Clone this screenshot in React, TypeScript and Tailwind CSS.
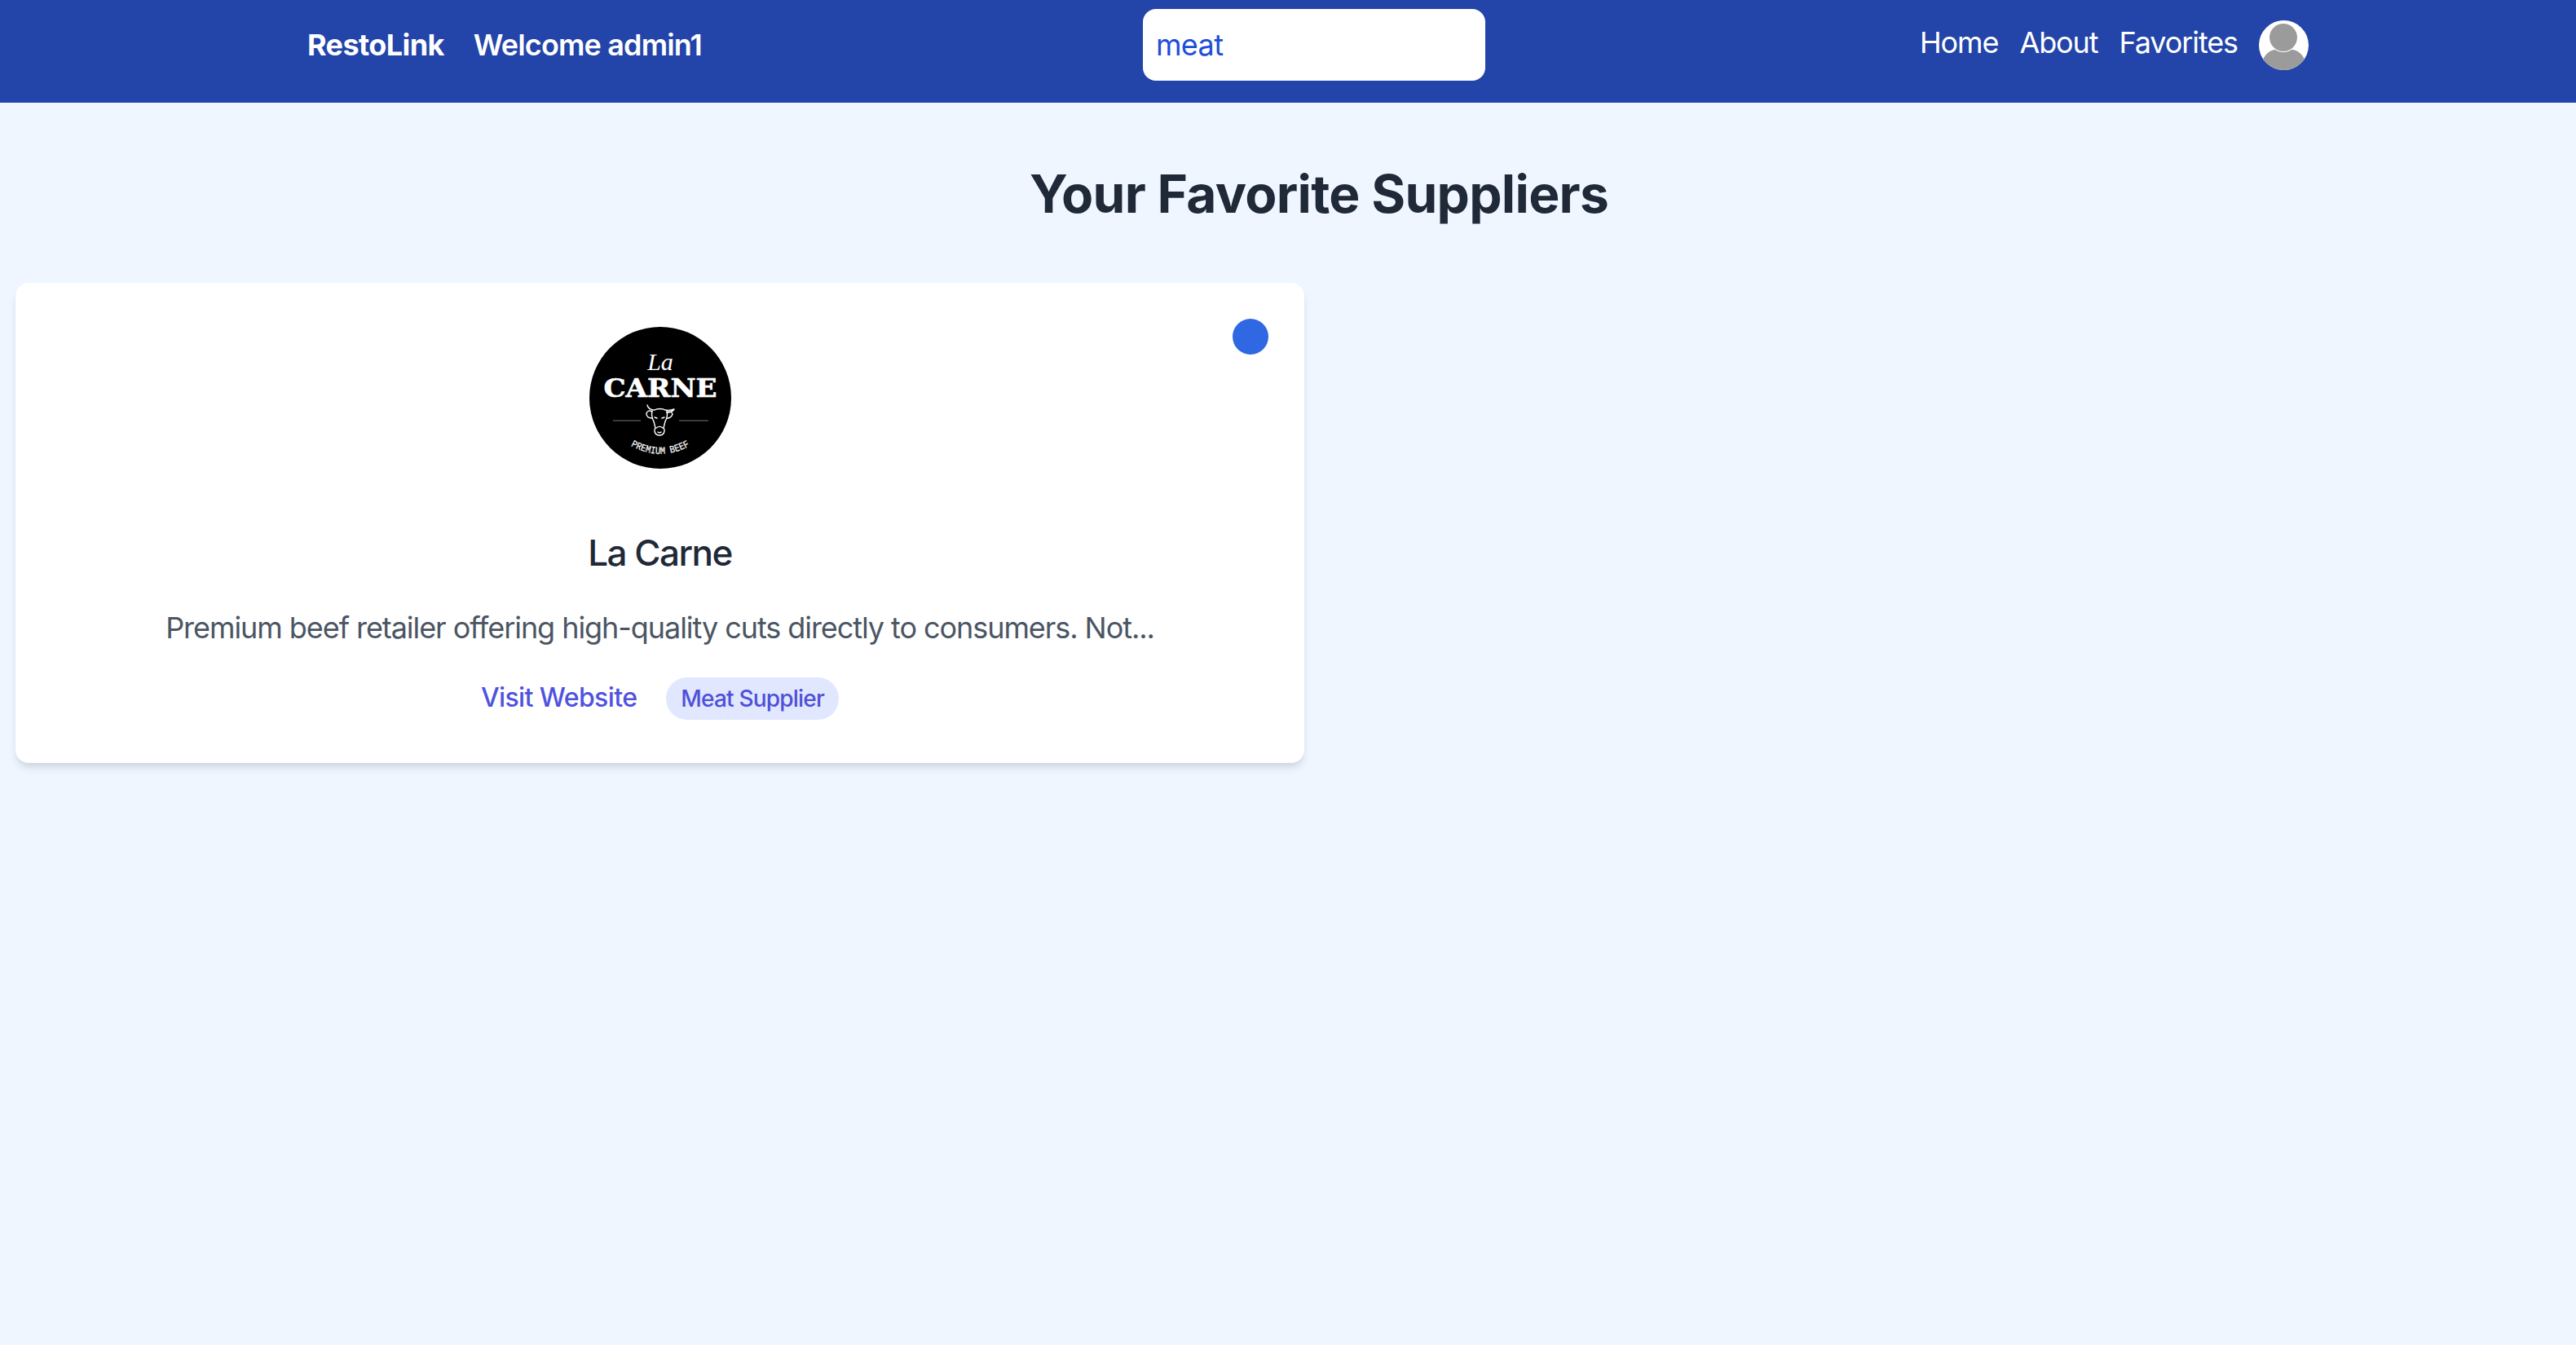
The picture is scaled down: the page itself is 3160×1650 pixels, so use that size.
import React from 'react';

const CarneLogo: React.FC = () => (
  <svg viewBox="0 0 174 174" className="w-[174px] h-[174px]">
    <circle cx="87" cy="87" r="87" fill="#000" />
    <text x="87" y="53" textAnchor="middle" fill="#fff" fontFamily="'Liberation Serif', serif" fontStyle="italic" fontSize="30">La</text>
    <text x="87" y="86" textAnchor="middle" fill="#fff" stroke="#fff" strokeWidth="0.6" fontFamily="'DejaVu Serif', serif" fontWeight="700" fontSize="31" textLength="139" lengthAdjust="spacingAndGlyphs">CARNE</text>
    <path d="M29 115h34M110 115h36" stroke="#777" strokeWidth="1.2" />
    {/* cow head */}
    <g fill="none" stroke="#fff" strokeWidth="1.4" strokeLinejoin="round" strokeLinecap="round">
      <path d="M71 96c1 4 5 6 9 6 3-2 10-2 13 0 4 1 8 0 11-1-2 3-5 4-9 4" />
      <path d="M77 104c-3-2-6-1-7 2 0 4 3 6 7 6M95 105c3-2 6-1 7 2-1 3-3 5-7 5" />
      <path d="M77 103c-1 5 0 10 2 13l2 8c-2 3-1 9 5 9s7-6 5-9l2-8c2-3 3-8 2-13" />
      <path d="M82 124c3-2 6-2 8 0M80 111l3 1M89 112l3-1M84 129c1 1 3 1 4 0" />
    </g>
    <defs>
      <path id="beefArc" d="M36 136 Q87 176 138 136" />
    </defs>
    <text fill="#fff" stroke="#fff" strokeWidth="0.2" fontFamily="'Liberation Mono', monospace" fontSize="12.500">
      <textPath href="#beefArc" startOffset="50%" textAnchor="middle" textLength="76" lengthAdjust="spacingAndGlyphs">PREMIUM BEEF</textPath>
    </text>
  </svg>
);

const Avatar: React.FC = () => (
  <svg viewBox="0 0 61 61" className="w-[61px] h-[61px] mt-[2px]">
    <defs>
      <clipPath id="avatarClip">
        <circle cx="30.500" cy="30.500" r="30.500" />
      </clipPath>
    </defs>
    <circle cx="30.500" cy="30.500" r="30.500" fill="#fff" />
    <g clipPath="url(#avatarClip)">
      <path d="M4 61V52c1-8 8-15 15-16h23c7 1 14 8 15 16v9z" fill="#9b9b9b" />
      <circle cx="30" cy="21" r="18" fill="#fff" />
      <circle cx="30" cy="21" r="17" fill="#9b9b9b" />
    </g>
  </svg>
);

export default function App() {
  return (
    <div className="min-h-screen bg-[#eff6ff] font-['Inter',sans-serif] overflow-hidden">
      <nav className="bg-[#2344a8] h-[126px] pl-[377px] pr-[328px] pt-[11px] flex justify-between items-start">
        <div className="flex items-center h-[87px] gap-[36px] text-white text-[36px] font-semibold tracking-[-0.85px]">
          <span className="font-bold tracking-[-0.6px]">RestoLink</span>
          <span>Welcome admin1</span>
        </div>
        <input
          readOnly
          value="meat"
          className="ml-[8px] w-[420px] h-[88px] bg-white rounded-[16px] px-[16px] text-[36px] tracking-[-0.6px] text-[#1d4ed8] outline-none"
        />
        <div className="flex items-center h-[87px] gap-[26px] text-white text-[36px] tracking-[-1.1px]">
          <a className="mb-[6px]">Home</a>
          <a className="mb-[6px]">About</a>
          <a className="mb-[6px]">Favorites</a>
          <Avatar />
        </div>
      </nav>

      <main className="px-[19px]">
        <h1 className="pl-[76px] pt-[64px] pb-[61px] text-center text-[64px] leading-[96px] font-bold tracking-[-0.7px] text-[#1f2937]">
          Your Favorite Suppliers
        </h1>
        <div className="grid grid-cols-[1581px]">
          <div className="relative bg-white rounded-[16px] h-[589px] pt-[54px] flex flex-col items-center shadow-[0_8px_12px_-2px_rgba(0,0,0,0.1),0_4px_8px_-4px_rgba(0,0,0,0.1)]">
            <span className="absolute top-[44px] right-[44px] w-[44px] h-[44px] rounded-full bg-[#3068e3]" />
            <CarneLogo />
            <h2 className="mt-[75px] text-[44px] leading-[56px] font-medium tracking-[-1.5px] text-[#1f2937]">La Carne</h2>
            <p className="mt-[36px] text-[36px] leading-[56px] tracking-[-1.06px] text-[#4b5563]">
              Premium beef retailer offering high-quality cuts directly to consumers. Not...
            </p>
            <div className="mt-[33px] flex items-center gap-[36px]">
              <a className="text-[32px] font-medium tracking-[-0.6px] text-[#4f52e0] -translate-y-px">Visit Website</a>
              <span className="h-[52px] flex items-center px-[18px] rounded-full bg-[#e0e7ff] text-[28px] font-medium tracking-[-0.8px] text-[#4f50d8]">
                Meat Supplier
              </span>
            </div>
          </div>
        </div>
      </main>
    </div>
  );
}
